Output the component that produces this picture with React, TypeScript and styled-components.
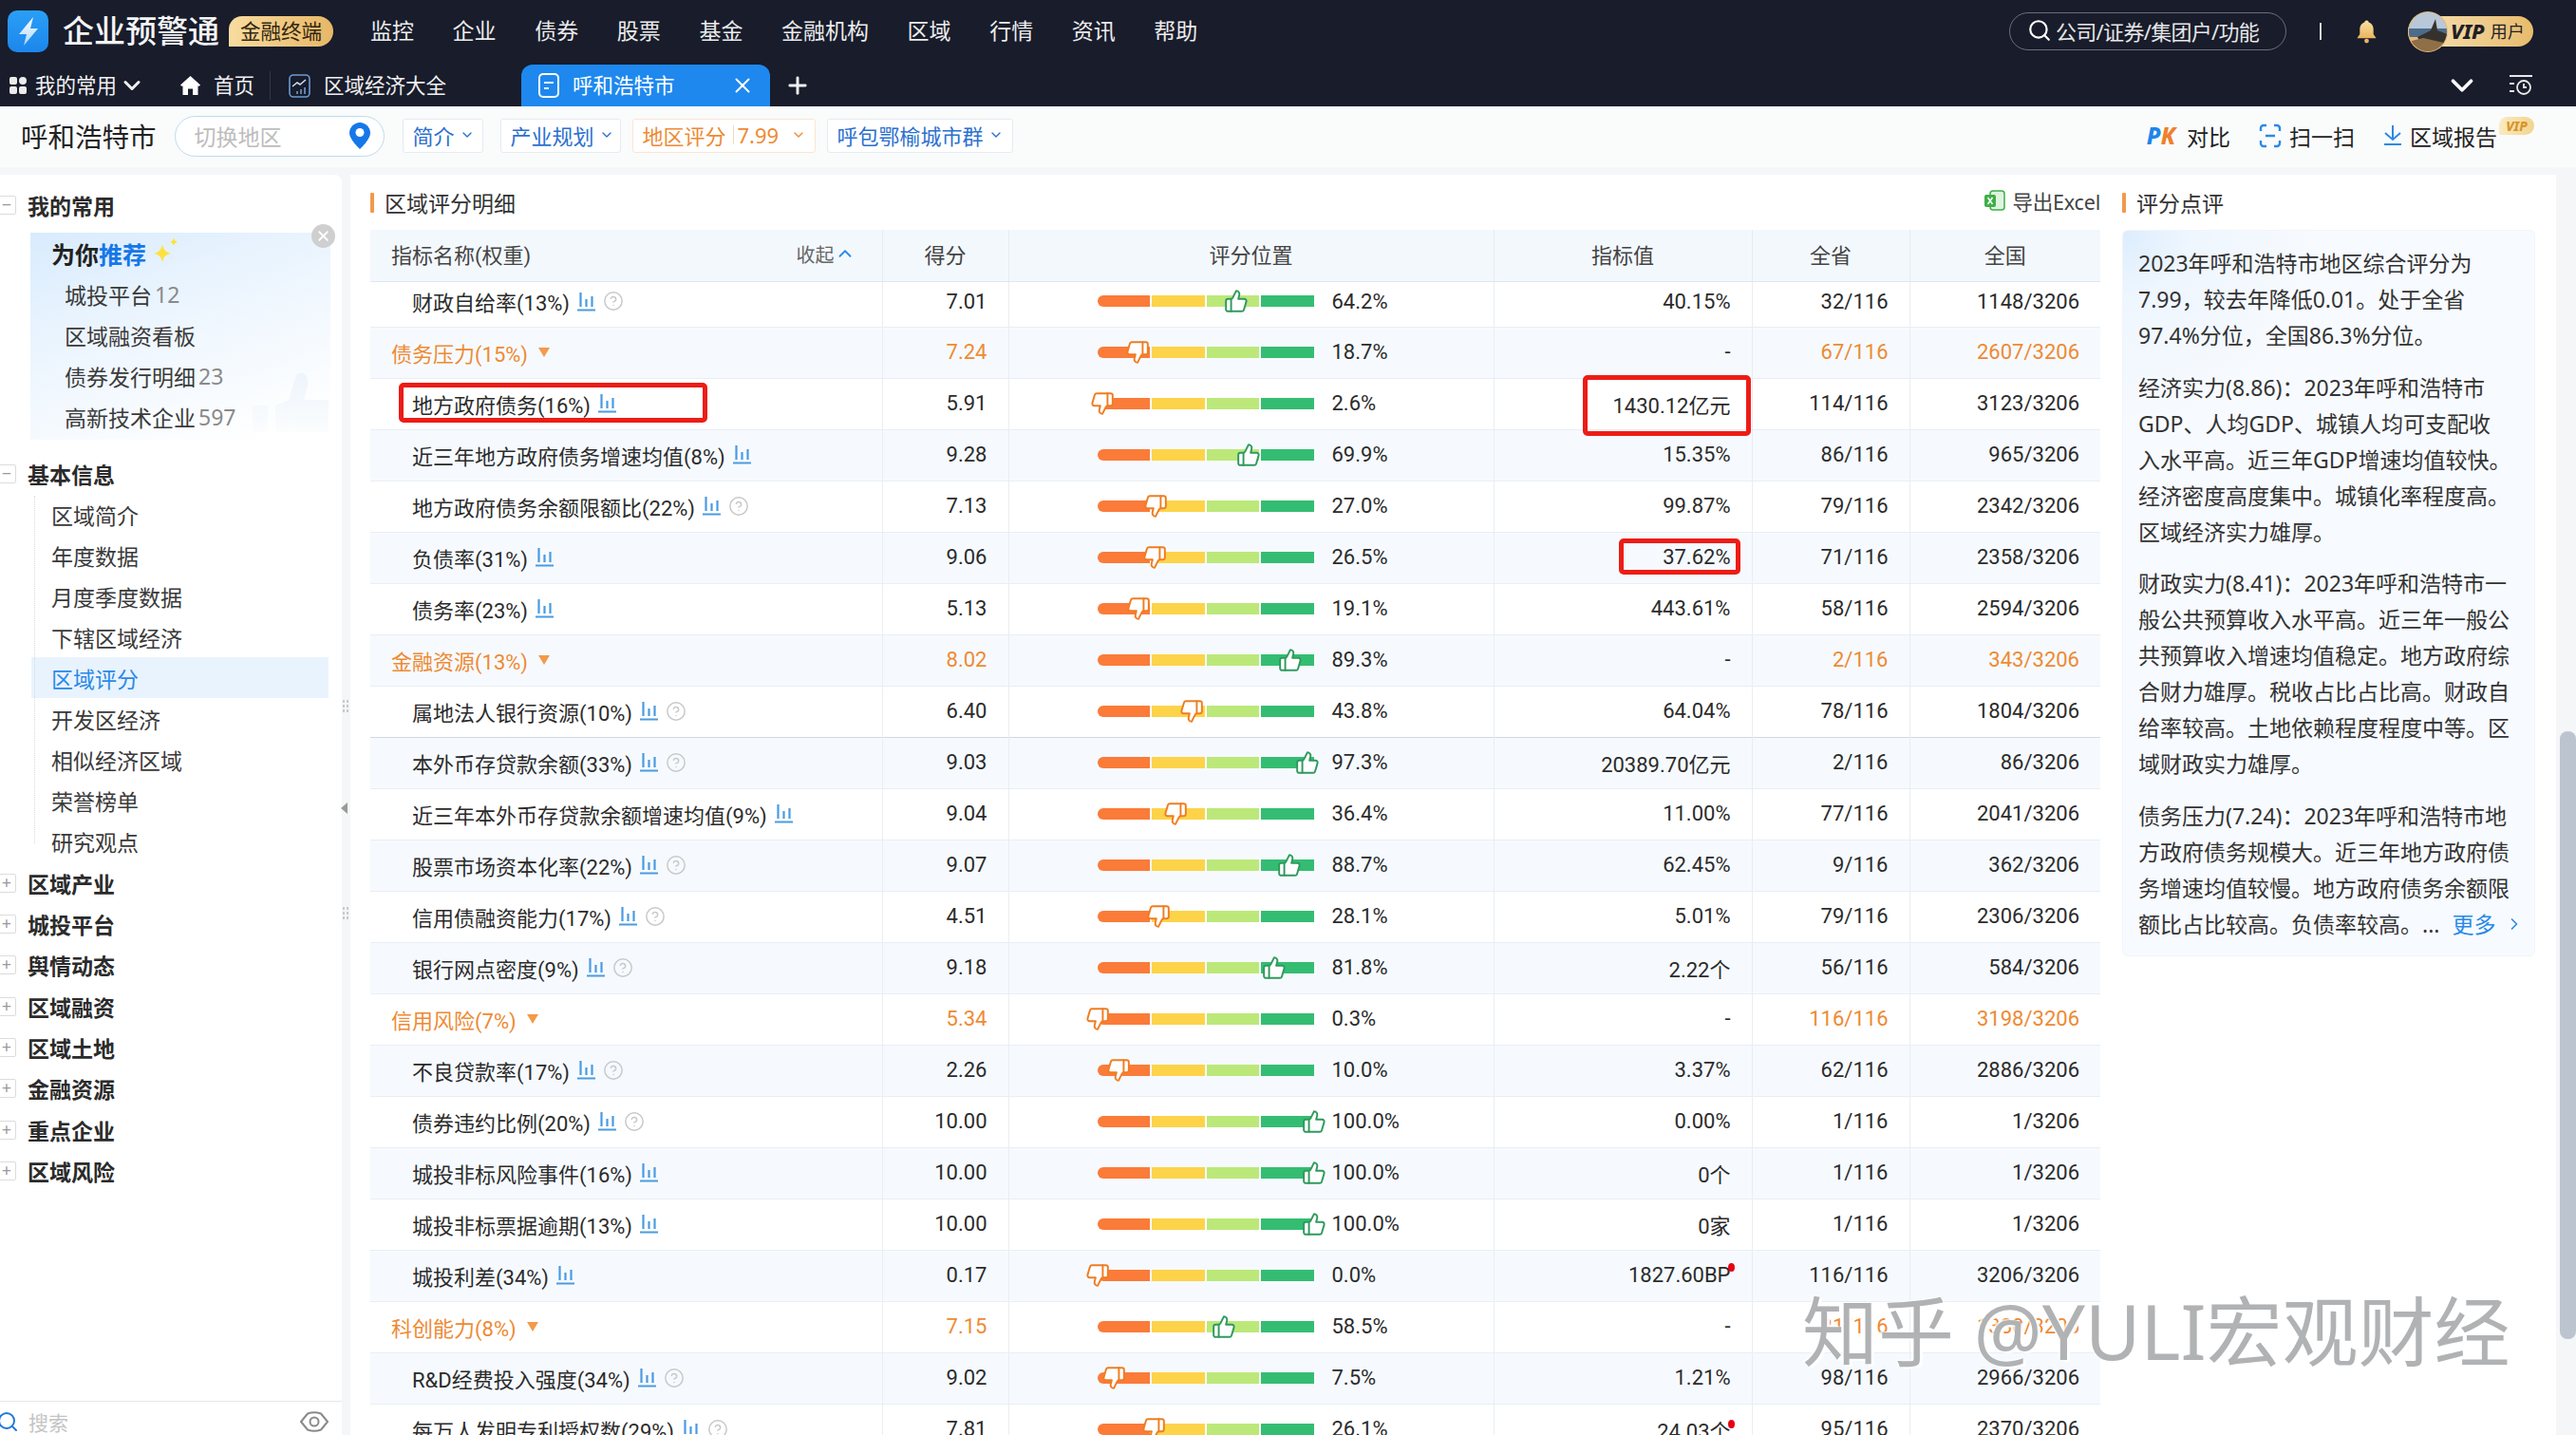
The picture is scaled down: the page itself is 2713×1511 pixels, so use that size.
import React from 'react'
import styled, { createGlobalStyle } from 'styled-components'
import { ChevronDown, ChevronUp, ChevronRight, CircleHelp, Plus, Search, ThumbsDown, ThumbsUp, X } from 'lucide-react'

const GlobalStyle = createGlobalStyle`
  html, body {
    margin: 0;
    padding: 0;
    background: #f5f6f8;
  }
  * {
    box-sizing: border-box;
  }
  body {
    font-family: "Noto Sans", "Noto Sans CJK SC", sans-serif;
    color: #2b2b2b;
  }
`

const Page = styled.div`
  position: relative;
  width: 2713px;
  height: 1511px;
  overflow: hidden;
  background: #f5f6f8;
  display: flex;
  flex-direction: column;
`

const TopBar = styled.header`
  background: #181c2b;
  height: 112px;
  flex: none;
  color: #fff;
`

const NavRow = styled.div`
  height: 65px;
  display: flex;
  align-items: center;
  padding: 0 45px 0 8px;
`

const Logo = styled.svg`
  width: 43px;
  height: 44px;
  flex: none;
`

const Brand = styled.div`
  margin: 0 0 3px 15px;
  font-size: 33px;
  font-weight: 500;
  color: #f4f4f4;
  white-space: nowrap;
`

const GoldBadge = styled.div`
  margin-left: 10px;
  width: 110px;
  height: 32px;
  border-radius: 14px 16px 16px 0;
  background: linear-gradient(90deg, #f8dca0, #e7b766);
  color: #33260f;
  font-size: 21.5px;
  padding-bottom: 2px;
  display: flex;
  align-items: center;
  justify-content: center;
`

const MainNav = styled.nav`
  margin: 0 0 3px 39px;
  display: flex;
  gap: 40.6px;
`

const NavLink = styled.span`
  font-size: 23px;
  color: #ececec;
  white-space: nowrap;
`

const SearchPill = styled.div`
  margin-left: auto;
  width: 292px;
  height: 40px;
  border: 1px solid #6b6f7d;
  border-radius: 20px;
  display: flex;
  align-items: center;
  gap: 4px;
  padding: 0 0 2px 18px;
  font-size: 22px;
  letter-spacing: -0.7px;
  color: #e6e6e6;
  white-space: nowrap;
`

const NavDivider = styled.span`
  width: 2px;
  height: 18px;
  background: #d8d8d8;
  margin-left: 35px;
`

const Bell = styled.svg`
  width: 23px;
  height: 26px;
  margin-left: 36px;
`

const VipPill = styled.div`
  position: relative;
  margin-left: 32px;
  width: 132px;
  height: 32px;
  border-radius: 16px;
  background: linear-gradient(90deg, #f6e3b8, #e8bb6c);
  display: flex;
  align-items: center;
  padding: 0 0 2px 45px;
  color: #1f1f28;
  font-size: 18px;
  white-space: nowrap;
`

const VipMark = styled.b`
  font-style: italic;
  font-weight: 800;
  font-size: 22px;
  margin-right: 6px;
`

const Avatar = styled.svg`
  position: absolute;
  left: 0;
  top: -5px;
  width: 42px;
  height: 43px;
`

const TabRow = styled.div`
  height: 47px;
  display: flex;
  align-items: flex-end;
  padding: 0 46px 0 10px;
`

const TabItem = styled.div<{ $offset?: number }>`
  height: 44px;
  margin-left: ${({ $offset }) => $offset ?? 0}px;
  display: flex;
  align-items: center;
  font-size: 21.5px;
  color: #f0f0f0;
  white-space: nowrap;
`

const TabLabel = styled.span<{ $gap: number }>`
  margin: 0 0 3px ${({ $gap }) => $gap}px;
`

const TabDivider = styled.span`
  width: 1px;
  height: 30px;
  margin: 0 19px 7px 16px;
  background: #33384a;
`

const ActiveTab = styled.div`
  margin-left: 79px;
  width: 262px;
  height: 44px;
  border-radius: 12px 12px 0 0;
  background: #1e88ee;
  display: flex;
  align-items: center;
  padding: 0 16px 0 18px;
  font-size: 21.5px;
  color: #fff;
`

const ActiveLabel = styled.span`
  margin: 0 0 3px 14px;
  flex: 1;
`

const TabRight = styled.div`
  margin-left: auto;
  display: flex;
  align-items: center;
  gap: 31px;
  height: 44px;
`

const SubHeader = styled.div`
  height: 64px;
  flex: none;
  background: #fafbfb;
  display: flex;
  align-items: center;
  padding: 0 46px 0 22px;
`

const CityName = styled.div`
  font-size: 28.5px;
  margin-bottom: 4px;
  color: #222;
  white-space: nowrap;
`

const RegionInput = styled.div`
  width: 221px;
  height: 43px;
  margin: 0 0 2px 19px;
  border: 1px solid #bcdcf2;
  border-radius: 22px;
  background: #fff;
  display: flex;
  align-items: center;
  justify-content: space-between;
  padding: 0 14px 0 20px;
  font-size: 23px;
  color: #bdbdbd;
`

const FilterGroup = styled.div`
  display: flex;
  margin: 0 0 2px 19px;
`

const FilterButton = styled.div<{ $warm?: boolean; $width: number; $after: number }>`
  width: ${({ $width }) => $width}px;
  margin-right: ${({ $after }) => $after}px;
  height: 36px;
  padding: 0 0 2px 10px;
  display: flex;
  align-items: center;
  gap: 5px;
  background: #fff;
  border: 1px solid ${({ $warm }) => ($warm ? '#fbe5d3' : '#e4ebf3')};
  border-radius: 3px;
  font-size: 22px;
  white-space: nowrap;
  color: ${({ $warm }) => ($warm ? '#ee8a33' : '#2c70cf')};
`

const FilterSplit = styled.span`
  width: 1px;
  height: 20px;
  background: #f6d9bd;
  margin: 0 -1px 0 2px;
`

const Tools = styled.div`
  margin-left: auto;
  display: flex;
  align-items: center;
  font-size: 23px;
  color: #222;
  white-space: nowrap;
`

const Tool = styled.div`
  display: flex;
  align-items: center;
  margin-left: 30px;
  gap: 8px;
  padding-bottom: 3px;
`

const PkMark = styled.span`
  font-style: italic;
  font-weight: 800;
  font-size: 24px;
  color: #1e84ea;
  margin-right: 4px;
`

const PkK = styled.span`
  color: #f0802c;
`

const VipTag = styled.span`
  margin: -20px -2px 0 -6px;
  width: 37px;
  height: 19px;
  border-radius: 9px 10px 10px 1px;
  background: linear-gradient(90deg, #fbeac2, #f2d48f);
  color: #d9952a;
  font-size: 14px;
  font-weight: 800;
  font-style: italic;
  text-align: center;
  line-height: 19px;
`

const Body = styled.div`
  flex: 1;
  min-height: 0;
  margin-top: 8px;
  display: flex;
  gap: 9px;
  padding-right: 21px;
`

const Sidebar = styled.aside`
  width: 360px;
  flex: none;
  background: #fff;
  border-radius: 0 8px 0 0;
  display: flex;
  flex-direction: column;
`

const Tree = styled.div`
  flex: 1;
  padding-top: 10px;
`

const SectionRow = styled.div<{ $tall?: boolean }>`
  height: ${({ $tall }) => ($tall ? '43.4px' : '43px')};
  display: flex;
  align-items: center;
  font-size: 23px;
  font-weight: 700;
  color: #2b2b2b;
`

const ExpandBox = styled.span`
  width: 20px;
  height: 20px;
  margin-left: -3px;
  margin-right: 12px;
  border: 1px solid #dcdcdc;
  border-radius: 2px;
  background: #fff;
  color: #999;
  font-size: 18px;
  font-weight: 400;
  line-height: 17px;
  text-align: center;
`

const RecommendPanel = styled.div`
  position: relative;
  margin: 8px 12px 14px 32px;
  height: 218px;
  background: linear-gradient(160deg, #d8ebfd 0%, #eaf4fe 35%, #ffffff 92%);
`

const RecommendTitle = styled.div`
  height: 43px;
  padding-left: 22px;
  display: flex;
  align-items: center;
  font-size: 25px;
  font-weight: 700;
  color: #222;
`

const Accent = styled.span`
  color: #1677e8;
`

const Sparkle = styled.svg`
  width: 28px;
  height: 28px;
  margin: -8px 0 0 7px;
`

const CloseDot = styled.span`
  position: absolute;
  right: -5px;
  top: -9px;
  width: 25px;
  height: 25px;
  border-radius: 50%;
  background: #cfcfcf;
  color: #fff;
  display: flex;
  align-items: center;
  justify-content: center;
`

const Fade = styled.svg`
  position: absolute;
  right: 2px;
  bottom: 8px;
  width: 80px;
  height: 64px;
`

const RecommendItem = styled.div`
  height: 43.2px;
  padding-left: 36px;
  display: flex;
  align-items: center;
  gap: 3px;
  font-size: 23px;
  color: #3a3a3a;
`

const Count = styled.span`
  color: #8a8a8a;
`

const SubList = styled.div`
  position: relative;
  margin-left: 33px;
  &::before {
    content: '';
    position: absolute;
    left: 3px;
    top: 2px;
    bottom: 20px;
    border-left: 1px dotted #d9d9d9;
  }
`

const SubItem = styled.div<{ $active?: boolean }>`
  height: 43.1px;
  margin-right: 14px;
  padding-left: 21px;
  display: flex;
  align-items: center;
  font-size: 23px;
  color: ${({ $active }) => ($active ? '#2a8ae8' : '#3a3a3a')};
  background: ${({ $active }) => ($active ? '#e9f3fd' : 'transparent')};
`

const SideSearch = styled.div`
  height: 36px;
  flex: none;
  border-top: 1px solid #e8e8e8;
  display: flex;
  align-items: center;
  padding: 6px 14px 0 0;
  margin-left: -4px;
  gap: 10px;
  font-size: 21px;
  color: #c4c4c4;
`

const EyeIcon = styled.svg`
  margin-left: auto;
  width: 30px;
  height: 22px;
`

const Handle = styled.span<{ $top: number }>`
  position: absolute;
  left: 360px;
  top: ${({ $top }) => $top}px;
  width: 7px;
  height: 16px;
  background-image: radial-gradient(#c9c9c9 1px, transparent 1.2px);
  background-size: 4px 5px;
`

const HandleArrow = styled.span`
  position: absolute;
  left: 359px;
  top: 845px;
  border: 6px solid transparent;
  border-right: 7px solid #9a9a9a;
  border-left: 0;
`

const Main = styled.main`
  flex: 1;
  background: #fff;
  display: flex;
  padding-left: 21px;
  min-width: 0;
`

const TablePane = styled.section`
  width: 1822px;
  flex: none;
`

const PaneHead = styled.div`
  height: 58px;
  display: flex;
  align-items: center;
  font-size: 23px;
  color: #333;
`

const TitleBar = styled.span`
  width: 4px;
  height: 21px;
  margin-right: 11px;
  border-radius: 1px;
  background: #f09a4c;
`

const ExportLink = styled.div`
  margin-left: auto;
  display: flex;
  align-items: center;
  gap: 8px;
  font-size: 21.5px;
  letter-spacing: -0.2px;
  color: #444;
  margin-bottom: 4px;
`

const ScoreTable = styled.table`
  width: 1822px;
  table-layout: fixed;
  border-collapse: collapse;
  font-family: Roboto, "Noto Sans CJK SC", sans-serif;
  font-size: 22px;
  color: #2b2b2b;
`

const HeadCell = styled.th`
  height: 54px;
  padding: 0 22px 3px;
  background: #f3f8fd;
  font-weight: 400;
  font-size: 22px;
  color: #444;
  text-align: center;
  border-left: 1px solid #e6ecf3;
  border-bottom: 1px solid #dfe6ee;
  &:first-child {
    border-left: 0;
  }
`

const HeadName = styled.div`
  display: flex;
  justify-content: space-between;
  align-items: center;
  text-align: left;
`

const CollapseLink = styled.span`
  display: flex;
  align-items: center;
  font-size: 20px;
  color: #666;
  margin-right: 6px;
`

const Row = styled.tr<{ $tint: boolean; $clipped?: boolean; $strong?: boolean }>`
  height: ${({ $clipped }) => ($clipped ? 48 : 54)}px;
  background: ${({ $tint }) => ($tint ? '#f6fafe' : '#fff')};
  border-bottom: 1px solid ${({ $strong }) => ($strong ? '#cfd9e2' : '#e9eef4')};
  & > td {
    padding-bottom: ${({ $clipped }) => ($clipped ? 6 : 1)}px;
  }
`

const Cell = styled.td<{ $warm?: boolean }>`
  padding: 0 22px;
  text-align: right;
  white-space: nowrap;
  color: ${({ $warm }) => ($warm ? '#ee8a33' : '#2b2b2b')};
  border-left: 1px solid #e9eef4;
`

const NameCell = styled.td<{ $group?: boolean }>`
  padding: 0 0 0 ${({ $group }) => ($group ? 22 : 44)}px;
  white-space: nowrap;
  color: ${({ $group }) => ($group ? '#ee8a33' : '#2b2b2b')};
`

const NameInner = styled.div`
  display: flex;
  align-items: center;
  gap: 7px;
`

const Caret = styled.span`
  margin-left: 4px;
  border: 6px solid transparent;
  border-top: 10px solid #f39a4b;
  border-bottom: 0;
`

const BarCell = styled.td`
  padding: 0 0 0 93px;
  border-left: 1px solid #e9eef4;
`

const BarWrap = styled.div`
  display: flex;
  align-items: center;
  gap: 19px;
`

const Bar = styled.div`
  position: relative;
  width: 228px;
  height: 12px;
  display: flex;
  gap: 2px;
`

const Segment = styled.span<{ $color: string }>`
  flex: 1;
  background: ${({ $color }) => $color};
  &:first-child {
    border-radius: 6px 0 0 6px;
  }
  &:last-child {
    border-radius: 0 6px 6px 0;
  }
`

const Marker = styled.span`
  position: absolute;
  top: -7px;
  width: 26px;
  height: 26px;
  margin-left: -13px;
  display: flex;
`

const ValueText = styled.span`
  position: relative;
`

const RedDot = styled.span`
  position: absolute;
  right: -4px;
  top: 0;
  width: 7px;
  height: 9px;
  border-radius: 50%;
  background: #e60012;
`

const CommentPane = styled.section`
  width: 435px;
  margin-left: 23px;
  flex: none;
`

const CommentBox = styled.div`
  height: 765px;
  padding: 15px 10px 0 16px;
  background: radial-gradient(circle at 0 0, #dcedfd 0, #eef6fe 70px, #f7fafe 200px);
  border: 1px solid #f2f5f8;
  border-radius: 6px;
  font-size: 23px;
  line-height: 38px;
  color: #333;
`

const Paragraph = styled.p`
  margin: 0 0 16.7px;
`

const Line = styled.span`
  display: block;
  white-space: nowrap;
`

const MoreLink = styled.span`
  color: #2a8ae8;
  margin-left: 13px;
  display: inline-flex;
  align-items: center;
  gap: 9px;
`

const ScrollThumb = styled.div`
  position: absolute;
  right: 0;
  top: 770px;
  width: 17px;
  height: 640px;
  border-radius: 8px;
  background: #bcc5cf;
`

const Callout = styled.div<{ $x: number; $y: number; $w: number; $h: number }>`
  position: absolute;
  left: ${({ $x }) => $x}px;
  top: ${({ $y }) => $y}px;
  width: ${({ $w }) => $w}px;
  height: ${({ $h }) => $h}px;
  border: 5px solid #ed1c16;
  border-radius: 5px;
`

const Watermark = styled.div`
  position: absolute;
  left: 1898px;
  top: 1346px;
  font-size: 80px;
  line-height: 110px;
  color: #b0b2b4;
  white-space: nowrap;
  text-shadow: 3px 2px 0 rgba(255, 255, 255, 0.95), -2px -1px 0 rgba(255, 255, 255, 0.7);
`

type ScoreRow = {
  name: string
  score: string
  pct: number
  value: string
  province: string
  nation: string
  group?: boolean
  chart?: boolean
  help?: boolean
  dot?: boolean
}

const rows: ScoreRow[] = [
  { name: '财政自给率(13%)', score: '7.01', pct: 64.2, value: '40.15%', province: '32/116', nation: '1148/3206', chart: true, help: true },
  { name: '债务压力(15%)', score: '7.24', pct: 18.7, value: '-', province: '67/116', nation: '2607/3206', group: true },
  { name: '地方政府债务(16%)', score: '5.91', pct: 2.6, value: '1430.12亿元', province: '114/116', nation: '3123/3206', chart: true },
  { name: '近三年地方政府债务增速均值(8%)', score: '9.28', pct: 69.9, value: '15.35%', province: '86/116', nation: '965/3206', chart: true },
  { name: '地方政府债务余额限额比(22%)', score: '7.13', pct: 27.0, value: '99.87%', province: '79/116', nation: '2342/3206', chart: true, help: true },
  { name: '负债率(31%)', score: '9.06', pct: 26.5, value: '37.62%', province: '71/116', nation: '2358/3206', chart: true },
  { name: '债务率(23%)', score: '5.13', pct: 19.1, value: '443.61%', province: '58/116', nation: '2594/3206', chart: true },
  { name: '金融资源(13%)', score: '8.02', pct: 89.3, value: '-', province: '2/116', nation: '343/3206', group: true },
  { name: '属地法人银行资源(10%)', score: '6.40', pct: 43.8, value: '64.04%', province: '78/116', nation: '1804/3206', chart: true, help: true },
  { name: '本外币存贷款余额(33%)', score: '9.03', pct: 97.3, value: '20389.70亿元', province: '2/116', nation: '86/3206', chart: true, help: true },
  { name: '近三年本外币存贷款余额增速均值(9%)', score: '9.04', pct: 36.4, value: '11.00%', province: '77/116', nation: '2041/3206', chart: true },
  { name: '股票市场资本化率(22%)', score: '9.07', pct: 88.7, value: '62.45%', province: '9/116', nation: '362/3206', chart: true, help: true },
  { name: '信用债融资能力(17%)', score: '4.51', pct: 28.1, value: '5.01%', province: '79/116', nation: '2306/3206', chart: true, help: true },
  { name: '银行网点密度(9%)', score: '9.18', pct: 81.8, value: '2.22个', province: '56/116', nation: '584/3206', chart: true, help: true },
  { name: '信用风险(7%)', score: '5.34', pct: 0.3, value: '-', province: '116/116', nation: '3198/3206', group: true },
  { name: '不良贷款率(17%)', score: '2.26', pct: 10.0, value: '3.37%', province: '62/116', nation: '2886/3206', chart: true, help: true },
  { name: '债券违约比例(20%)', score: '10.00', pct: 100.0, value: '0.00%', province: '1/116', nation: '1/3206', chart: true, help: true },
  { name: '城投非标风险事件(16%)', score: '10.00', pct: 100.0, value: '0个', province: '1/116', nation: '1/3206', chart: true },
  { name: '城投非标票据逾期(13%)', score: '10.00', pct: 100.0, value: '0家', province: '1/116', nation: '1/3206', chart: true },
  { name: '城投利差(34%)', score: '0.17', pct: 0.0, value: '1827.60BP', province: '116/116', nation: '3206/3206', chart: true, dot: true },
  { name: '科创能力(8%)', score: '7.15', pct: 58.5, value: '-', province: '21/116', nation: '1380/3206', group: true },
  { name: 'R&D经费投入强度(34%)', score: '9.02', pct: 7.5, value: '1.21%', province: '98/116', nation: '2966/3206', chart: true, help: true },
  { name: '每万人发明专利授权数(29%)', score: '7.81', pct: 26.1, value: '24.03个', province: '95/116', nation: '2370/3206', chart: true, help: true, dot: true },
]

const comments: string[][] = [
  ['2023年呼和浩特市地区综合评分为', '7.99，较去年降低0.01。处于全省', '97.4%分位，全国86.3%分位。'],
  [
    '经济实力(8.86)：2023年呼和浩特市',
    'GDP、人均GDP、城镇人均可支配收',
    '入水平高。近三年GDP增速均值较快。',
    '经济密度高度集中。城镇化率程度高。',
    '区域经济实力雄厚。',
  ],
  [
    '财政实力(8.41)：2023年呼和浩特市一',
    '般公共预算收入水平高。近三年一般公',
    '共预算收入增速均值稳定。地方政府综',
    '合财力雄厚。税收占比占比高。财政自',
    '给率较高。土地依赖程度程度中等。区',
    '域财政实力雄厚。',
  ],
  ['债务压力(7.24)：2023年呼和浩特市地', '方政府债务规模大。近三年地方政府债', '务增速均值较慢。地方政府债务余额限'],
]

const navLinks = ['监控', '企业', '债券', '股票', '基金', '金融机构', '区域', '行情', '资讯', '帮助']
const baseInfo = ['区域简介', '年度数据', '月度季度数据', '下辖区域经济', '区域评分', '开发区经济', '相似经济区域', '荣誉榜单', '研究观点']
const closedSections = ['区域产业', '城投平台', '舆情动态', '区域融资', '区域土地', '金融资源', '重点企业', '区域风险']
const segments = ['#fb7b39', '#fdd349', '#bce87a', '#34bd72']

const BarsIcon = () => (
  <svg width="21" height="21" viewBox="0 0 21 21" fill="none" stroke="#4a9be2" strokeWidth="2.2">
    <path d="M1 19.5h19M4.500 1v15M10.500 8v8M16.500 5v11" />
  </svg>
)

const ScoreBar = ({ pct }: { pct: number }) => (
  <BarWrap>
    <Bar>
      {segments.map((c) => (
        <Segment key={c} $color={c} />
      ))}
      <Marker style={{ left: `${pct}%` }}>
        {pct >= 50 ? (
          <ThumbsUp size={26} color="#2f9a5d" fill="#fff" strokeWidth={1.8} />
        ) : (
          <ThumbsDown size={26} color="#ef7d22" fill="#fff" strokeWidth={1.8} />
        )}
      </Marker>
    </Bar>
    <span>{pct.toFixed(1)}%</span>
  </BarWrap>
)

export default function App() {
  return (
    <Page>
      <GlobalStyle />
      <TopBar>
        <NavRow>
          <Logo viewBox="0 0 43 44">
            <defs>
              <linearGradient id="logoBlue" x1="0" y1="0" x2="0" y2="1">
                <stop offset="0" stopColor="#2a9ff6" />
                <stop offset="1" stopColor="#1c86ec" />
              </linearGradient>
              <linearGradient id="boltFade" x1="0" y1="0" x2="0" y2="1">
                <stop offset="0" stopColor="#ffffff" />
                <stop offset="1" stopColor="#a9d8fb" />
              </linearGradient>
            </defs>
            <rect width="43" height="44" rx="10" fill="url(#logoBlue)" />
            <path d="M27 7 L12 25 H20 L17 37 L32 19 H24 Z" fill="url(#boltFade)" />
          </Logo>
          <Brand>企业预警通</Brand>
          <GoldBadge>金融终端</GoldBadge>
          <MainNav>
            {navLinks.map((l) => (
              <NavLink key={l}>{l}</NavLink>
            ))}
          </MainNav>
          <SearchPill>
            <Search size={26} color="#fff" strokeWidth={2} />
            公司/证券/集团户/功能
          </SearchPill>
          <NavDivider />
          <Bell viewBox="0 0 24 26">
            <defs>
              <linearGradient id="bellGold" x1="0" y1="0" x2="0" y2="1">
                <stop offset="0" stopColor="#f8e0a4" />
                <stop offset="1" stopColor="#eab45e" />
              </linearGradient>
            </defs>
            <path d="M12 1c1.400 0 2.200.9 2.300 2.200C18 4.300 19.500 7.500 19.500 11v5l3 4.500H1.500l3-4.500v-5c0-3.500 1.500-6.700 5.200-7.800C9.800 1.900 10.600 1 12 1z" fill="url(#bellGold)" />
            <circle cx="12" cy="23.500" r="2.500" fill="#eab45e" />
          </Bell>
          <VipPill>
            <Avatar viewBox="0 0 42 43">
              <defs>
                <clipPath id="avatarClip">
                  <ellipse cx="21" cy="21.500" rx="20" ry="20.500" />
                </clipPath>
              </defs>
              <ellipse cx="21" cy="21.500" rx="21" ry="21.500" fill="#e6b877" />
              <g clipPath="url(#avatarClip)">
                <rect width="42" height="19" fill="#b8c8d8" />
                <rect y="18" width="42" height="9" fill="#4d6c8c" />
                <path d="M10 27 L24 20 L29 8 L31 20 L42 24 V34 H14 Z" fill="#35322d" />
                <path d="M0 32 L16 28 L42 34 V43 H0 Z" fill="#8f6f48" />
              </g>
            </Avatar>
            <VipMark>VIP</VipMark>
            用户
          </VipPill>
        </NavRow>
        <TabRow>
          <TabItem>
            <svg width="18" height="18" viewBox="0 0 18 18" fill="#ececec">
              <rect width="8" height="8" rx="2" />
              <circle cx="14" cy="4" r="4" />
              <rect y="10" width="8" height="8" rx="2" />
              <rect x="10" y="10" width="8" height="8" rx="2" />
            </svg>
            <TabLabel $gap={9}>我的常用</TabLabel>
            <ChevronDown size={28} strokeWidth={2.600} style={{ marginLeft: 2 }} />
          </TabItem>
          <TabItem $offset={37}>
            <svg width="21" height="20" viewBox="0 0 21 20" fill="#fff">
              <path d="M10.500 0 L21 9.500 Q20.500 11 18.500 10.500 V20 H13 V13.500 H8 V20 H2.500 V10.500 Q.5 11 0 9.500 Z" />
            </svg>
            <TabLabel $gap={14}>首页</TabLabel>
          </TabItem>
          <TabDivider />
          <TabItem>
            <svg width="23" height="25" viewBox="0 0 23 25" fill="none" stroke="#6b9bd4" strokeWidth="1.600">
              <rect x="1" y="1" width="21" height="23" rx="4" />
              <path d="M4 13 L9 9 L12 11 L18 6" stroke="#c9dcf2" />
              <path d="M9 21v-3M13 21v-5M17 21v-7" />
            </svg>
            <TabLabel $gap={14}>区域经济大全</TabLabel>
          </TabItem>
          <ActiveTab>
            <svg width="22" height="26" viewBox="0 0 22 26" fill="none" stroke="#fff" strokeWidth="2">
              <rect x="1" y="1" width="20" height="24" rx="4" />
              <path d="M6 10h10M6 16h5" />
            </svg>
            <ActiveLabel>呼和浩特市</ActiveLabel>
            <X size={26} strokeWidth={1.800} />
          </ActiveTab>
          <TabItem $offset={15}>
            <Plus size={28} strokeWidth={2.500} />
          </TabItem>
          <TabRight>
            <ChevronDown size={38} strokeWidth={2.400} />
            <svg width="24" height="22" viewBox="0 0 24 22" fill="none" stroke="#e8e8e8" strokeWidth="1.800">
              <path d="M0 1h24M0 9h5M0 17h5" />
              <circle cx="15" cy="13" r="7" />
              <path d="M15 9v4h3" />
            </svg>
          </TabRight>
        </TabRow>
      </TopBar>

      <SubHeader>
        <CityName>呼和浩特市</CityName>
        <RegionInput>
          切换地区
          <svg width="22" height="28" viewBox="0 0 22 28">
            <path d="M11 0C5 0 0 5 0 11c0 7 11 17 11 17s11-10 11-17C22 5 17 0 11 0z" fill="#1677e8" />
            <circle cx="11" cy="10.500" r="4.500" fill="#fff" />
          </svg>
        </RegionInput>
        <FilterGroup>
          <FilterButton $width={85} $after={18}>
            简介
            <ChevronDown size={16} />
          </FilterButton>
          <FilterButton $width={127} $after={12}>
            产业规划
            <ChevronDown size={16} />
          </FilterButton>
          <FilterButton $warm $width={193} $after={12}>
            地区评分
            <FilterSplit />
            7.99
            <ChevronDown size={16} style={{ marginLeft: 8 }} />
          </FilterButton>
          <FilterButton $width={196} $after={0}>
            呼包鄂榆城市群
            <ChevronDown size={16} />
          </FilterButton>
        </FilterGroup>
        <Tools>
          <Tool>
            <PkMark>
              P<PkK>K</PkK>
            </PkMark>
            对比
          </Tool>
          <Tool>
            <svg width="24" height="26" viewBox="0 0 24 26" fill="none" stroke="#2a8ae8" strokeWidth="2.400">
              <path d="M8 2H5a3 3 0 0 0-3 3v3M16 2h3a3 3 0 0 1 3 3v3M8 24H5a3 3 0 0 1-3-3v-3M16 24h3a3 3 0 0 0 3-3v-3M7 13h10" />
            </svg>
            扫一扫
          </Tool>
          <Tool>
            <svg width="20" height="21" viewBox="0 0 20 21" fill="none" stroke="#2a8ae8" strokeWidth="2">
              <path d="M10 0v15M2 8l8 7 8-7M1 20h18" />
            </svg>
            区域报告
            <VipTag>VIP</VipTag>
          </Tool>
        </Tools>
      </SubHeader>

      <Body>
        <Sidebar>
          <Tree>
            <SectionRow>
              <ExpandBox>−</ExpandBox>我的常用
            </SectionRow>
            <RecommendPanel>
              <RecommendTitle>
                为你<Accent>推荐</Accent>
                <Sparkle viewBox="0 0 28 28">
                  <path d="M10 8 Q11 16 19 18 Q11 19 10 27 Q9 19 1 18 Q9 16 10 8z" fill="#fde23c" />
                  <path d="M22 1 Q22.500 5 26 6 Q22.500 6.500 22 10 Q21.500 6.500 18 6 Q21.500 5 22 1z" fill="#fde23c" />
                </Sparkle>
              </RecommendTitle>
              <CloseDot>
                <X size={17} strokeWidth={2.500} />
              </CloseDot>
              <Fade viewBox="0 0 80 64">
                <defs>
                  <linearGradient id="thumbFade" x1="0" y1="0" x2="0" y2="1">
                    <stop offset="0" stopColor="#edf4fb" />
                    <stop offset="1" stopColor="#fbfdfe" />
                  </linearGradient>
                </defs>
                <path d="M0 36h16v28H0zM24 36l14-6 8-26c7-7 14 2 12 11l-4 15h26v34H24z" fill="url(#thumbFade)" />
              </Fade>
              <RecommendItem>
                城投平台<Count>12</Count>
              </RecommendItem>
              <RecommendItem>区域融资看板</RecommendItem>
              <RecommendItem>
                债券发行明细<Count>23</Count>
              </RecommendItem>
              <RecommendItem>
                高新技术企业<Count>597</Count>
              </RecommendItem>
            </RecommendPanel>
            <SectionRow>
              <ExpandBox>−</ExpandBox>基本信息
            </SectionRow>
            <SubList>
              {baseInfo.map((item) => (
                <SubItem key={item} $active={item === '区域评分'}>
                  {item}
                </SubItem>
              ))}
            </SubList>
            {closedSections.map((s) => (
              <SectionRow key={s} $tall>
                <ExpandBox>+</ExpandBox>
                {s}
              </SectionRow>
            ))}
          </Tree>
          <SideSearch>
            <Search size={24} color="#1e78d8" />
            搜索
            <EyeIcon viewBox="0 0 30 22" fill="none" stroke="#8a8a8a" strokeWidth="2">
              <path d="M1 11 L8 2.500 Q15 0 22 2.500 L29 11 L22 19.500 Q15 22 8 19.500 Z" strokeLinejoin="round" />
              <circle cx="15" cy="11" r="4.500" />
            </EyeIcon>
          </SideSearch>
        </Sidebar>
        <Main>
          <TablePane>
            <PaneHead>
              <TitleBar />
              区域评分明细
              <ExportLink>
                <svg width="22" height="22" viewBox="0 0 22 22">
                  <rect x="6" y="1" width="15" height="20" rx="3" fill="#dff3df" stroke="#3fae49" strokeWidth="1.500" />
                  <rect x="0" y="5" width="12" height="13" rx="2" fill="#3fae49" />
                  <path d="M3.500 8 L8.500 15 M8.500 8 L3.500 15" stroke="#fff" strokeWidth="1.500" />
                </svg>
                导出Excel
              </ExportLink>
            </PaneHead>
            <ScoreTable>
              <colgroup>
                <col style={{ width: 539 }} />
                <col style={{ width: 133 }} />
                <col style={{ width: 511 }} />
                <col style={{ width: 272 }} />
                <col style={{ width: 166 }} />
                <col style={{ width: 201 }} />
              </colgroup>
              <thead>
                <tr>
                  <HeadCell>
                    <HeadName>
                      指标名称(权重)
                      <CollapseLink>
                        收起
                        <ChevronUp size={22} color="#2a8ae8" />
                      </CollapseLink>
                    </HeadName>
                  </HeadCell>
                  <HeadCell>得分</HeadCell>
                  <HeadCell>评分位置</HeadCell>
                  <HeadCell>指标值</HeadCell>
                  <HeadCell>全省</HeadCell>
                  <HeadCell>全国</HeadCell>
                </tr>
              </thead>
              <tbody>
                {rows.map((r, i) => (
                  <Row key={r.name} $tint={i % 2 === 1} $clipped={i === 0} $strong={i === 8}>
                    <NameCell $group={r.group}>
                      <NameInner>
                        {r.name}
                        {r.group && <Caret />}
                        {r.chart && <BarsIcon />}
                        {r.help && <CircleHelp size={22} color="#c8c8c8" strokeWidth={1.600} />}
                      </NameInner>
                    </NameCell>
                    <Cell $warm={r.group}>{r.score}</Cell>
                    <BarCell>
                      <ScoreBar pct={r.pct} />
                    </BarCell>
                    <Cell>
                      <ValueText>
                        {r.value}
                        {r.dot && <RedDot />}
                      </ValueText>
                    </Cell>
                    <Cell $warm={r.group}>{r.province}</Cell>
                    <Cell $warm={r.group}>{r.nation}</Cell>
                  </Row>
                ))}
              </tbody>
            </ScoreTable>
          </TablePane>
          <CommentPane>
            <PaneHead>
              <TitleBar />
              评分点评
            </PaneHead>
            <CommentBox>
              {comments.map((lines) => (
                <Paragraph key={lines[0]}>
                  {lines.map((l) => (
                    <Line key={l}>{l}</Line>
                  ))}
                  {lines[0].startsWith('债务压力') && (
                    <Line>
                      额比占比较高。负债率较高。...
                      <MoreLink>
                        更多
                        <ChevronRight size={20} />
                      </MoreLink>
                    </Line>
                  )}
                </Paragraph>
              ))}
            </CommentBox>
          </CommentPane>
        </Main>
      </Body>

      <Handle $top={736} />
      <Handle $top={954} />
      <HandleArrow />
      <ScrollThumb />
      <Callout $x={420} $y={403} $w={325} $h={42} />
      <Callout $x={1667} $y={395} $w={177} $h={64} />
      <Callout $x={1705} $y={567} $w={128} $h={38} />
      <Watermark>知乎 @YULI宏观财经</Watermark>
    </Page>
  )
}
